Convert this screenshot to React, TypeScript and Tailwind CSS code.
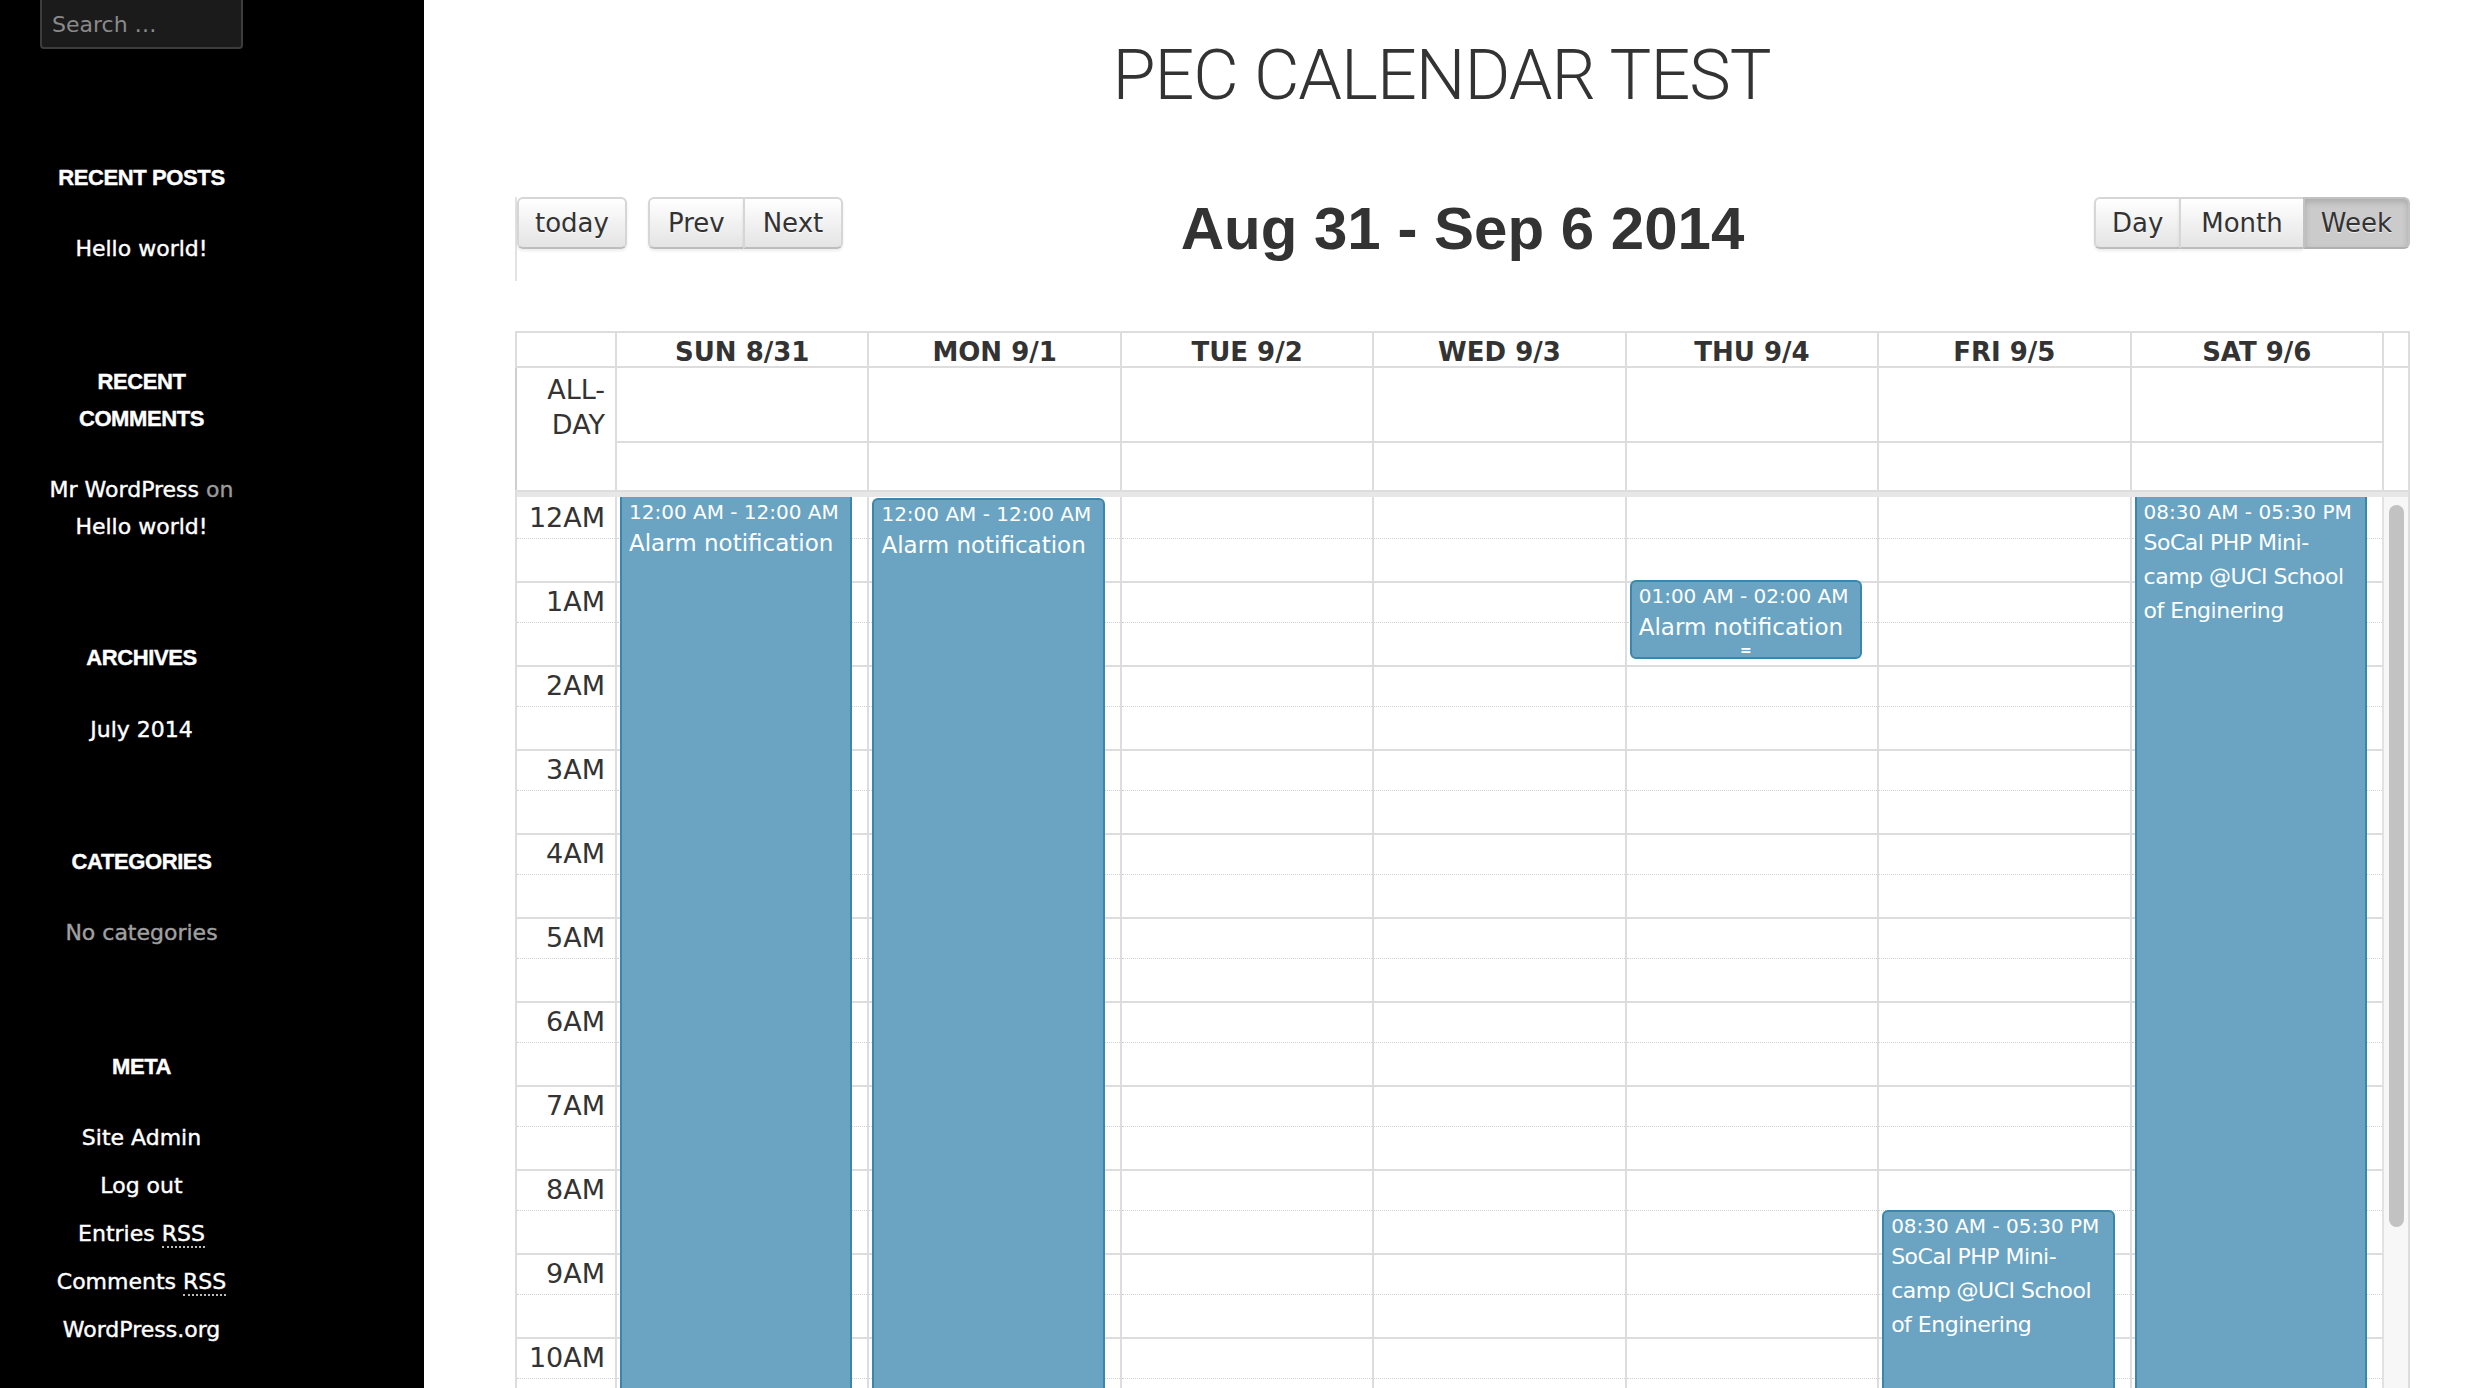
import React from 'react';

const days = ['SUN 8/31', 'MON 9/1', 'TUE 9/2', 'WED 9/3', 'THU 9/4', 'FRI 9/5', 'SAT 9/6'];
const hours = ['12AM', '1AM', '2AM', '3AM', '4AM', '5AM', '6AM', '7AM', '8AM', '9AM', '10AM', '11AM'];

const HOUR = 84;

interface CalEvent {
  day: number;
  start: number; // offset in hours from the top of the grid
  height: number;
  time: string;
  title: string[];
  small?: boolean;
  flatTop?: boolean;
  resizer?: boolean;
}

const events: CalEvent[] = [
  { day: 0, start: 0, height: 1100, time: '12:00 AM - 12:00 AM', title: ['Alarm notification'], flatTop: true },
  { day: 1, start: 0, height: 1100, time: '12:00 AM - 12:00 AM', title: ['Alarm notification'] },
  { day: 4, start: 1, height: 79, time: '01:00 AM - 02:00 AM', title: ['Alarm notification'], resizer: true },
  { day: 5, start: 8.5, height: 800, time: '08:30 AM - 05:30 PM', title: ['SoCal PHP Mini-', 'camp @UCI School', 'of Enginering'], small: true },
  { day: 6, start: 0, height: 1100, time: '08:30 AM - 05:30 PM', title: ['SoCal PHP Mini-', 'camp @UCI School', 'of Enginering'], small: true, flatTop: true },
];

const cols = 'grid grid-cols-[98px_repeat(7,minmax(0,1fr))_26px]';

function Btn({ children, pos, active, pad = 'px-[16px]' }: { children: React.ReactNode; pos: 'single' | 'first' | 'mid' | 'last'; active?: boolean; pad?: string }) {
  const shape =
    pos === 'single' ? 'rounded-[6px] border-r-2' :
    pos === 'first' ? 'rounded-l-[6px]' :
    pos === 'last' ? 'rounded-r-[6px] border-r-2' : '';
  const look = active
    ? 'bg-[#cbcbcb] shadow-[inset_0_3px_6px_rgba(0,0,0,0.16)] border-[#c2c2c2] border-b-[#b0b0b0]'
    : 'bg-linear-to-b from-white to-[#e4e4e4] shadow-[0_2px_3px_rgba(0,0,0,0.08)] border-[#d6d6d6] border-b-[#bdbdbd]';
  return (
    <div className={`h-[52px] ${pad} flex items-center text-[26px] leading-none text-[#333] border-y-2 border-l-2 [text-shadow:0_1px_1px_rgba(255,255,255,0.75)] ${shape} ${look}`}>
      {children}
    </div>
  );
}

function HourCell({ first, label }: { first?: boolean; label?: string }) {
  return (
    <div className={`h-[84px] border-t-2 ${first ? 'border-transparent' : 'border-[#ddd]'}`}>
      <div className="h-[40px] border-b border-dotted border-[#d2d2d2] flex justify-end items-start pr-[10px] pt-[2px] text-[27px] leading-[34px] text-[#333]">
        {label}
      </div>
    </div>
  );
}

function EventBox({ ev }: { ev: CalEvent }) {
  return (
    <div
      className={`absolute left-[3px] right-[15px] overflow-hidden bg-[#6aa4c2] border-x-2 border-b-2 border-[#3a87ad] text-white px-[7px] ${
        ev.flatTop ? 'pt-[1px]' : 'border-t-2 rounded-[6px]'
      }`}
      style={{ top: ev.start * HOUR + (ev.flatTop ? 0 : 1) - (ev.start > 0 && !ev.flatTop ? 2 : 0), height: ev.height }}
    >
      <div className="text-[20px] leading-[28px] whitespace-nowrap">{ev.time}</div>
      <div className={ev.small ? 'text-[22px] leading-[34px] tracking-[-0.5px] whitespace-nowrap' : 'text-[23px] leading-[34px] whitespace-nowrap'}>
        {ev.title.map((t, i) => (
          <div key={i}>{t}</div>
        ))}
      </div>
      {ev.resizer && <div className="text-center text-[14px] leading-[12px] font-bold">=</div>}
    </div>
  );
}

function Sidebar() {
  const heading = "font-['Liberation_Sans',Arial,sans-serif] font-bold text-[22px] tracking-[-0.4px] text-white";
  return (
    <aside className="w-[424px] shrink-0 bg-black text-white font-['DejaVu_Sans',sans-serif]">
      <div className="ml-[40px] -mt-[4px] h-[53px] w-[203px] rounded-[4px] border-2 border-[#3c3c3c] bg-[#1b1b1b] pl-[10px] pt-[4px] flex items-center text-[22px] text-[#8a8a8a]">
        Search …
      </div>
      <div className="w-[283px] flex flex-col items-center text-center text-[22px] [-webkit-text-stroke:0.4px_currentColor]">
        <h3 className={`${heading} mt-[112px] leading-[34px]`}>RECENT POSTS</h3>
        <div className="mt-[37px] leading-[34px]">Hello world!</div>

        <h3 className={`${heading} mt-[97px] leading-[37px]`}>
          RECENT
          <br />
          COMMENTS
        </h3>
        <div className="mt-[34px] leading-[37px] whitespace-nowrap">
          Mr WordPress <span className="text-[#9a9a9a]">on</span>
          <br />
          Hello world!
        </div>

        <h3 className={`${heading} mt-[96px] leading-[34px]`}>ARCHIVES</h3>
        <div className="mt-[38px] leading-[34px]">July 2014</div>

        <h3 className={`${heading} mt-[98px] leading-[34px]`}>CATEGORIES</h3>
        <div className="mt-[37px] leading-[34px] text-[#a0a0a0]">No categories</div>

        <h3 className={`${heading} mt-[100px] leading-[34px]`}>META</h3>
        <div className="mt-[30px] leading-[48px] whitespace-nowrap">
          <div>Site Admin</div>
          <div>Log out</div>
          <div>
            Entries <abbr className="no-underline border-b-2 border-dotted border-[#bbb]">RSS</abbr>
          </div>
          <div>
            Comments <abbr className="no-underline border-b-2 border-dotted border-[#bbb]">RSS</abbr>
          </div>
          <div>WordPress.org</div>
        </div>
      </div>
    </aside>
  );
}

export default function App() {
  return (
    <div className="flex w-[2490px] h-[1388px] overflow-hidden bg-white">
      <Sidebar />
      <main className="flex-1 min-w-0 pl-[91px] pr-[80px] pt-[40px] text-[#333] font-['DejaVu_Sans',sans-serif]">
        <h1 className="text-center pr-[42px] font-['Roboto','Liberation_Sans',sans-serif] font-light text-[70px] leading-[70px] tracking-[-1px] text-[#333]">
          PEC CALENDAR TEST
        </h1>

        {/* toolbar */}
        <div className="mt-[87px] grid grid-cols-[1fr_auto_1fr]">
          <div className="flex items-start gap-[21px] h-[84px] border-l-2 border-[#e3e3e3]">
            <Btn pos="single">today</Btn>
            <div className="flex">
              <Btn pos="first" pad="px-[18px]">Prev</Btn>
              <Btn pos="last" pad="px-[18px]">Next</Btn>
            </div>
          </div>
          <h2 className="mt-[2px] font-['Liberation_Sans',Arial,sans-serif] font-bold text-[60px] leading-[60px] text-[#333] whitespace-nowrap">
            Aug 31 - Sep 6 2014
          </h2>
          <div className="flex justify-end items-start">
            <Btn pos="first">Day</Btn>
            <Btn pos="mid" pad="px-[20px]">Month</Btn>
            <Btn pos="last" active>
              Week
            </Btn>
          </div>
        </div>

        {/* calendar */}
        <div className="mt-[50px] border-2 border-[#ddd]">
          <div className={`${cols} h-[35px] border-b-2 border-[#ddd]`}>
            <div />
            {days.map((d) => (
              <div key={d} className="border-l-2 border-[#ddd] flex items-center justify-center font-bold text-[26px] text-[#333]">
                {d}
              </div>
            ))}
            <div className="border-l-2 border-[#ddd]" />
          </div>

          <div className={`${cols} h-[122px]`}>
            <div className="pt-[4px] pr-[10px] text-right text-[27px] leading-[35px] border-l-2 border-[#cfcfcf] -ml-[2px]">ALL-DAY</div>
            {days.map((d) => (
              <div key={d} className="border-l-2 border-[#ddd]">
                <div className="h-[75px] border-b-2 border-[#ddd]" />
              </div>
            ))}
            <div className="border-l-2 border-[#ddd]" />
          </div>
          <div className="h-[7px] border-t-2 border-[#ddd] bg-[#e7e7e7]" />

          <div className={cols}>
            <div>
              {hours.map((h, i) => (
                <HourCell key={h} first={i === 0} label={h} />
              ))}
            </div>
            {days.map((d, di) => (
              <div key={d} className="relative border-l-2 border-[#ddd]">
                {hours.map((h, i) => (
                  <HourCell key={h} first={i === 0} />
                ))}
                {events
                  .filter((e) => e.day === di)
                  .map((e, i) => (
                    <EventBox key={i} ev={e} />
                  ))}
              </div>
            ))}
            <div className="border-l-2 border-[#e2e2e2] bg-[#f7f7f7] pt-[8px] flex justify-center">
              <div className="w-[15px] h-[722px] rounded-full bg-[#c2c2c2]" />
            </div>
          </div>
        </div>
      </main>
    </div>
  );
}
